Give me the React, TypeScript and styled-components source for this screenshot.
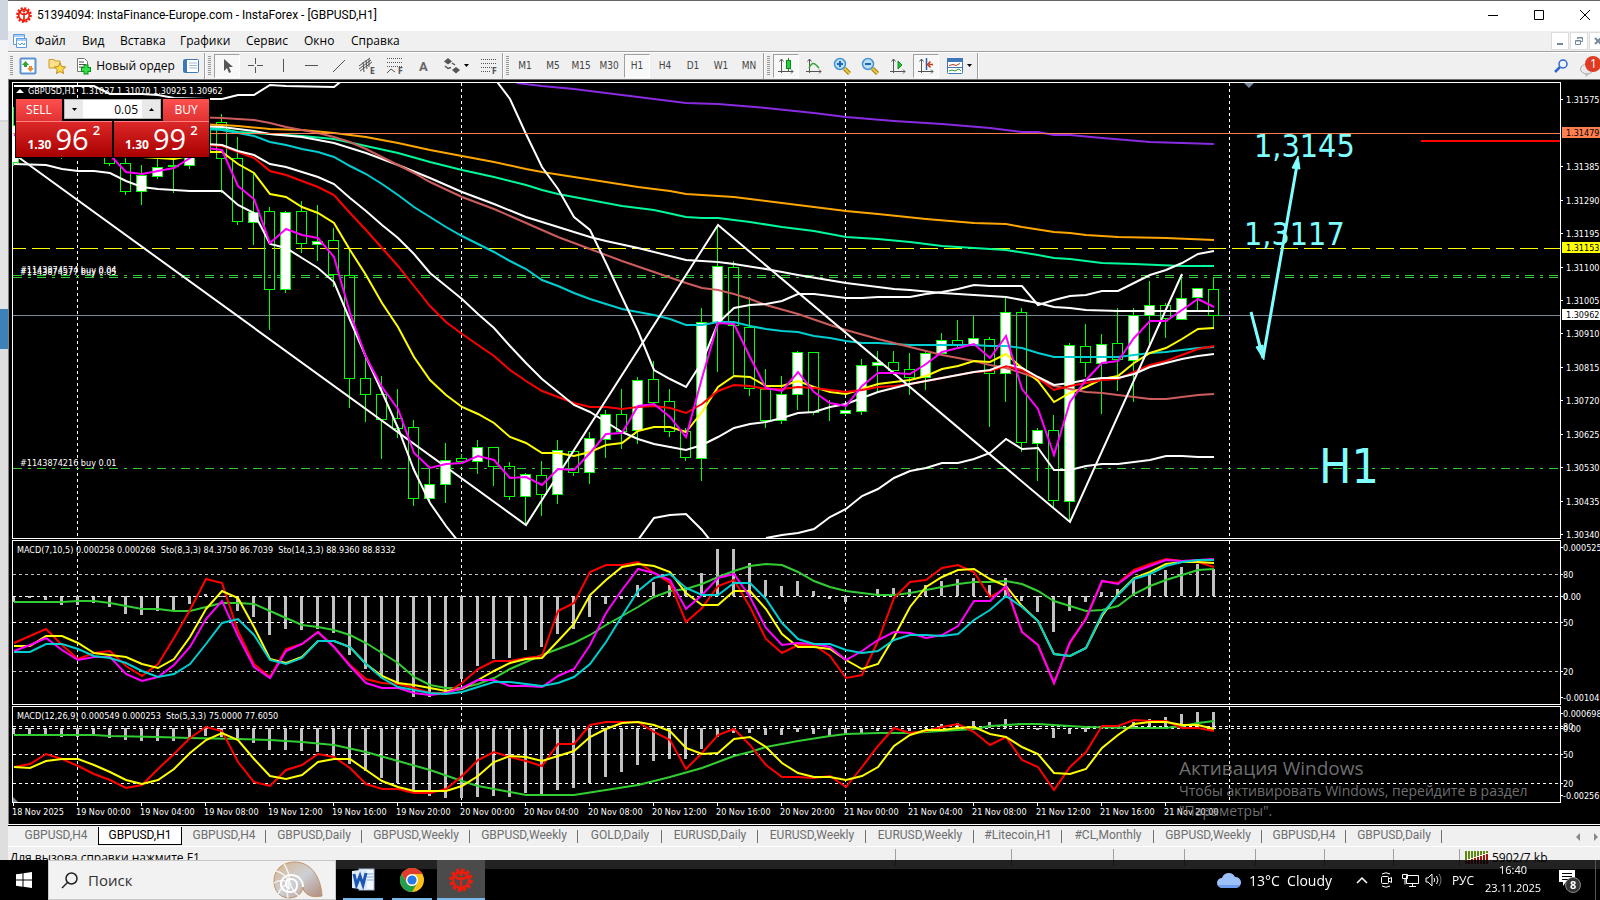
import React from "react";
import styled, { createGlobalStyle, css } from "styled-components";

/* ---------- tokens ---------- */

const UI = '"Open Sans", "Noto Sans", sans-serif';
const NARROW = 'Roboto, "Open Sans", sans-serif';
const CHART = '"DejaVu Sans Condensed", "DejaVu Sans", sans-serif';
const AQUA = "#7fffff";
const LIME = "#00ff00";

/* ---------- chart data ---------- */

const STEP = 16;
const barX = (i: number) => i * STEP + 1;

type Candle = [high: number, top: number, bottom: number, low: number, bull: 0 | 1];

const candles: Candle[] = [
  [107, 125, 162, 166, 1], [110, 125, 140, 150, 0], [110, 125, 140, 150, 0], [120, 130, 150, 159, 0],
  [120, 130, 150, 155, 0], [120, 130, 150, 155, 0], [130, 140, 163, 166, 0], [157, 163, 191, 195, 0],
  [165, 175, 191, 205, 1], [159, 167, 176, 179, 1], [150, 165, 166, 193, 0], [140, 150, 165, 169, 1],
  [120, 130, 150, 152, 1], [114, 122, 158, 193, 0], [137, 158, 221, 225, 0], [173, 212, 222, 245, 1],
  [207, 211, 289, 330, 0], [211, 212, 289, 293, 1], [201, 211, 243, 253, 0], [205, 241, 244, 261, 1],
  [228, 240, 274, 287, 0], [250, 275, 378, 408, 0], [357, 378, 394, 422, 0], [376, 394, 419, 459, 0],
  [389, 418, 428, 438, 0], [420, 427, 498, 506, 0], [467, 484, 498, 501, 1], [443, 460, 484, 503, 1],
  [454, 458, 461, 463, 0], [440, 447, 461, 474, 1], [447, 447, 466, 486, 0], [462, 466, 496, 500, 0],
  [473, 474, 496, 525, 1], [461, 475, 494, 516, 0], [440, 450, 494, 504, 1], [450, 451, 472, 476, 0],
  [432, 438, 472, 484, 1], [410, 414, 439, 458, 1], [389, 414, 431, 449, 0], [377, 380, 430, 444, 1],
  [361, 379, 402, 404, 0], [389, 401, 431, 437, 0], [428, 431, 457, 461, 0], [308, 322, 458, 481, 1],
  [225, 266, 322, 372, 1], [261, 267, 325, 375, 0], [297, 327, 388, 396, 0], [369, 389, 420, 428, 0],
  [376, 394, 420, 424, 1], [351, 352, 394, 410, 1], [352, 352, 412, 415, 0], [400, 412, 412, 421, 0],
  [407, 410, 413, 415, 1], [359, 365, 411, 415, 1], [351, 362, 365, 392, 1], [351, 362, 370, 375, 0],
  [353, 369, 377, 395, 0], [351, 353, 377, 390, 1], [333, 340, 353, 355, 1], [320, 340, 345, 347, 0],
  [316, 338, 344, 344, 1], [337, 339, 373, 427, 0], [298, 312, 373, 402, 1], [308, 312, 442, 452, 0],
  [428, 430, 443, 481, 1], [415, 430, 500, 508, 0], [343, 345, 501, 521, 1], [324, 346, 362, 377, 0],
  [334, 344, 363, 414, 1], [308, 343, 359, 391, 0], [308, 315, 360, 402, 1], [281, 305, 315, 348, 1],
  [303, 305, 318, 338, 0], [276, 298, 319, 320, 1], [288, 288, 297, 310, 1], [277, 289, 315, 327, 0],
];

type Line = { color: string; points: string };

/* points are "bar,y" pairs */
const from = (start: number, ys: number[]) => ys.map((y, i) => `${start + i},${y}`).join(" ");

const priceLines: Line[] = [
  { color: "#8a2be2", points: "31.4,83 33,86 35,89 38,95 42,103 44,104 47,108 50,113 52,117 55,121 58,124 61,128 63,132 64,132 65,135 66,135 68,138 71,142 73,143 75,144" },
  { color: "#ffa500", points: "11,124 13,125 14,126 16,129 18,130 20,133 22,137 24,143 26,150 28,156 30,162 32,169 33,172 35,177 37,182 39,187 41,191 42,194 44,196 45,197 48,203 52,211 54,214 57,219 60,223 62,224 63,227 65,232 66,233 67,235 69,237 72,238 75,240" },
  { color: "#00fa9a", points: "11,128 13,129 14,132 16,134 18,136 20,139 22,146 24,153 26,162 28,170 30,177 32,185 33,190 34,194 36,200 38,206 40,210 42,217 43,218 44,218 46,222 48,227 50,231 52,237 54,239 56,242 58,246 60,248 62,250 64,255 65,258 66,259 68,263 70,264 73,266 75,266" },
  { color: "#00ced1", points: from(12, [129, 130, 133, 136, 142, 145, 149, 152, 157, 166, 174, 184, 195, 207, 217, 227, 236, 244, 252, 261, 269, 280, 286, 293, 299, 304, 309, 312, 315, 319, 325, 325, 322, 322, 326, 329, 331, 332, 336, 338, 341, 343, 343, 344, 345, 345, 345, 345, 345, 346, 346, 348, 353, 357, 357, 357, 357, 357, 355, 353, 352, 350, 348, 347]) },
  { color: "#fff", points: "11,126 13,127 15,131 16,134 18,137 20,143 22,153 24,165 26,178 28,192 30,204 32,217 33,222 36,237 37,241 39,248 42,260 43,261 44,262 45,264 47,269 49,275 52,283 55,289 56,290 58,293 60,295 62,297 64,303 65,307 66,308 67,310 69,311 75,311" },
  { color: "#cd5c5c", points: "11,117 13,118 14,119 15,120 16,123 17,127 18,130 19,133 20,137 21,142 22,149 23,157 24,165 25,173 26,182 28,197 30,209 32,223 33,230 34,237 36,249 38,261 40,272 42,283 43,288 44,290 45,294 46,299 47,305 49,314 51,325 52,330 54,339 56,347 58,355 60,361 61,365 62,368 63,373 64,379 65,386 66,389 67,392 68,393 69,395 70,397 71,399 72,399 73,397 74,395 75,394" },
  { color: "#ffff00", points: from(6, [150, 155, 157, 158, 159, 156, 152, 152, 164, 173, 194, 197, 207, 213, 223, 250, 275, 303, 327, 357, 380, 395, 407, 414, 423, 437, 443, 453, 453, 456, 452, 445, 443, 431, 427, 427, 432, 412, 387, 376, 377, 386, 386, 381, 387, 392, 394, 389, 384, 382, 380, 376, 369, 366, 361, 362, 354, 368, 381, 402, 393, 387, 379, 376, 363, 353, 348, 339, 329, 328]) },
  { color: "#ff0000", points: from(12, [145, 146, 152, 158, 171, 175, 181, 187, 195, 213, 230, 248, 266, 286, 306, 322, 334, 345, 356, 370, 381, 391, 397, 403, 407, 407, 409, 407, 406, 408, 413, 404, 391, 385, 386, 389, 389, 387, 388, 390, 392, 390, 387, 386, 384, 381, 378, 375, 372, 371, 366, 370, 378, 390, 386, 383, 380, 379, 372, 365, 361, 355, 349, 346]) },
  { color: "#fff", points: from(12, [144, 145, 151, 155, 164, 167, 172, 177, 184, 198, 211, 225, 238, 254, 273, 286, 299, 314, 328, 346, 363, 379, 392, 405, 412, 422, 432, 439, 444, 447, 450, 445, 437, 428, 424, 422, 418, 413, 412, 407, 404, 398, 392, 388, 384, 381, 378, 375, 372, 370, 364, 368, 377, 385, 383, 380, 378, 378, 374, 367, 363, 359, 356, 354]) },
  { color: "#fff", points: "0,86 5,86 6,94 8,94 9,95 10,98 12,99 13,99 14,95 15,95 16,85 17,86 20,87 20.4,82" },
  { color: "#fff", points: "30.2,82 " + from(31, [99, 134, 167, 189, 217, 230, 263, 297, 331, 370, 379, 387, 362, 323, 308, 305, 304, 301, 294, 294, 296, 298, 298, 297, 297, 297, 294, 292, 289, 285, 286, 286, 286, 305, 300, 296, 295, 291, 291, 283, 275, 270, 263, 254, 251]) },
  { color: "#fff", points: "0,164 2,165 3,169 4,171 5,171 6,173 7,181 8,187 9,189 11,191 13,191 14,205 15,213 16,244 17,248 18,258 19,268 20,282 21,320 22,357 23,392 24,428 25,470 26,503 27,526 27.7,540" },
  { color: "#fff", points: "39,540 40,518 41,515 42,514 43,530 43.5,540" },
  { color: "#fff", points: from(47, [538, 535, 533, 529, 517, 509, 496, 489, 478, 471, 468, 463, 463, 459, 453, 439, 449, 448, 470, 470, 466, 464, 464, 462, 460, 456, 456, 457, 457]) },
  { color: "#fff", points: "0,154 32,525 44,225 66,522 73,274" },
  { color: "#ff00ff", points: from(0, [135, 140, 140, 140, 140, 145, 155, 172, 174, 171, 168, 158, 148, 150, 186, 199, 243, 229, 235, 238, 257, 313, 357, 387, 409, 453, 468, 464, 463, 456, 460, 478, 477, 485, 469, 470, 453, 434, 433, 406, 404, 417, 437, 378, 323, 324, 357, 388, 391, 372, 392, 403, 406, 386, 373, 373, 374, 364, 352, 348, 344, 358, 336, 389, 409, 455, 402, 380, 363, 361, 338, 321, 321, 310, 299, 307]) },
];

const macdFast = [602, 598, 600, 605, 605, 603, 607, 614, 615, 611, 610, 604, 594, 597, 611, 617, 635, 629, 630, 629, 633, 655, 669, 678, 683, 697, 697, 693, 679, 666, 659, 658, 650, 647, 634, 629, 617, 604, 599, 585, 582, 585, 588, 573, 549, 549, 563, 580, 586, 581, 591, 599, 602, 597, 589, 588, 589, 585, 581, 579, 578, 585, 578, 601, 612, 632, 611, 602, 592, 589, 580, 574, 570, 567, 564, 569];

const macdSlow = [734, 734, 734, 737, 737, 735, 738, 740, 741, 741, 741, 738, 736, 737, 739, 743, 750, 750, 751, 752, 756, 764, 771, 778, 783, 791, 796, 798, 798, 797, 796, 797, 793, 794, 790, 788, 783, 777, 772, 765, 761, 759, 759, 749, 737, 733, 733, 735, 735, 732, 734, 736, 735, 733, 731, 729, 731, 727, 724, 723, 721, 722, 719, 729, 730, 738, 734, 732, 729, 727, 722, 719, 717, 714, 712, 712];

const fastLines: Line[] = [
  { color: "#32cd32", points: from(0, [602, 602, 602, 602, 601, 601, 603, 606, 609, 609, 611, 611, 607, 603, 603, 604, 611, 618, 625, 627, 630, 635, 643, 653, 663, 677, 685, 688, 688, 684, 678, 669, 662, 655, 649, 643, 635, 625, 616, 607, 597, 591, 589, 584, 577, 571, 566, 564, 565, 572, 581, 587, 591, 593, 595, 595, 593, 590, 587, 584, 582, 582, 581, 584, 591, 601, 606, 611, 610, 606, 594, 586, 580, 575, 570, 569]) },
  { color: "#ff0000", points: from(0, [643, 636, 629, 645, 659, 653, 651, 666, 676, 664, 638, 610, 579, 583, 631, 664, 677, 649, 644, 632, 647, 665, 679, 683, 684, 688, 693, 693, 683, 669, 661, 661, 658, 656, 611, 603, 572, 565, 565, 562, 573, 583, 622, 608, 586, 580, 607, 639, 653, 645, 645, 656, 678, 675, 641, 598, 582, 580, 568, 565, 572, 597, 588, 632, 645, 683, 643, 618, 581, 583, 570, 564, 559, 561, 562, 567]) },
  { color: "#ffff00", points: from(0, [646, 646, 636, 636, 643, 653, 655, 657, 664, 668, 659, 637, 609, 591, 598, 627, 659, 663, 657, 641, 641, 647, 664, 676, 683, 685, 688, 691, 689, 680, 671, 663, 659, 658, 641, 624, 595, 580, 567, 564, 566, 572, 593, 605, 605, 591, 591, 609, 634, 647, 647, 649, 660, 669, 664, 637, 607, 587, 577, 570, 569, 579, 586, 606, 621, 654, 656, 648, 616, 594, 578, 572, 564, 562, 562, 563]) },
  { color: "#ff00ff", points: from(0, [651, 645, 638, 650, 660, 657, 657, 674, 681, 677, 665, 647, 619, 601, 636, 667, 678, 651, 644, 632, 647, 666, 683, 688, 688, 693, 695, 693, 688, 680, 680, 686, 686, 687, 676, 669, 645, 613, 590, 569, 573, 580, 609, 595, 578, 574, 597, 628, 645, 643, 644, 647, 660, 651, 640, 632, 633, 638, 635, 626, 601, 601, 586, 632, 645, 683, 642, 619, 581, 584, 572, 566, 560, 561, 560, 559]) },
  { color: "#00ced1", points: from(0, [652, 652, 644, 644, 649, 656, 658, 663, 671, 677, 674, 664, 644, 623, 619, 635, 660, 664, 658, 641, 641, 647, 664, 678, 687, 690, 693, 694, 692, 687, 682, 682, 684, 686, 683, 677, 664, 642, 616, 591, 578, 574, 588, 595, 595, 583, 583, 599, 623, 639, 644, 644, 650, 653, 651, 640, 635, 635, 636, 634, 620, 610, 596, 607, 621, 654, 656, 648, 614, 595, 579, 574, 566, 562, 560, 560]) },
];

const slowLines: Line[] = [
  { color: "#32cd32", points: "0,735 5,735 6,736 9,737 11,738 14,739 16,740 18,742 20,745 22,752 24,761 26,770 28,781 29,786 30,789 31,792 32,795 35,795 37,790 39,785 41,777 43,768 44,762 45,756 46,752 47,747 49,741 51,736 52,734 54,733 56,733 58,731 60,729 61,726 62,725 63,724 64,724 65,725 66,726 67,727 70,728 72,728 73,726 74,723 75,721" },
  { color: "#ff0000", points: from(0, [767, 764, 754, 759, 766, 774, 780, 788, 785, 769, 754, 738, 727, 731, 762, 782, 786, 770, 765, 754, 757, 768, 784, 789, 789, 793, 793, 789, 776, 760, 752, 757, 761, 766, 744, 744, 725, 722, 722, 722, 732, 740, 769, 753, 735, 729, 745, 765, 777, 777, 778, 776, 787, 767, 746, 728, 733, 731, 727, 724, 732, 745, 737, 760, 767, 790, 767, 752, 726, 726, 720, 721, 721, 728, 728, 731]) },
  { color: "#ffff00", points: from(0, [767, 768, 761, 759, 759, 765, 772, 780, 784, 780, 769, 753, 740, 733, 740, 759, 776, 779, 775, 762, 759, 759, 770, 781, 787, 791, 791, 791, 786, 776, 762, 756, 757, 761, 756, 751, 737, 729, 723, 722, 725, 731, 748, 754, 753, 739, 737, 747, 763, 773, 777, 777, 780, 776, 767, 746, 735, 730, 730, 728, 727, 734, 737, 747, 754, 773, 774, 769, 748, 735, 724, 722, 722, 725, 725, 729]) },
];

const priceTicks: [string, number][] = [
  ["1.31575", 99], ["1.31385", 166], ["1.31290", 200], ["1.31195", 233], ["1.31100", 267], ["1.31005", 300],
  ["1.30910", 333], ["1.30815", 367], ["1.30720", 400], ["1.30625", 434], ["1.30530", 467], ["1.30435", 501], ["1.30340", 534],
];
const priceFlags: [string, number, string, string][] = [
  ["1.31479", 133, "#ff7f50", "#000"],
  ["1.31153", 248, "#ffff00", "#000"],
  ["1.30962", 315, "#fff", "#000"],
];

const timeLabels = [
  "18 Nov 2025", "19 Nov 00:00", "19 Nov 04:00", "19 Nov 08:00", "19 Nov 12:00", "19 Nov 16:00", "19 Nov 20:00",
  "20 Nov 00:00", "20 Nov 04:00", "20 Nov 08:00", "20 Nov 12:00", "20 Nov 16:00", "20 Nov 20:00",
  "21 Nov 00:00", "21 Nov 04:00", "21 Nov 08:00", "21 Nov 12:00", "21 Nov 16:00", "21 Nov 20:00",
];

/* ---------- page frame ---------- */

const Global = createGlobalStyle`
  * { box-sizing: border-box; }
  html, body { margin: 0; background: #030303; }
  body { font-family: ${UI}; font-size: 12px; color: #000; overflow-x: hidden; }
  button, input { font: inherit; color: inherit; margin: 0; }
`;

const Desktop = styled.div`
  display: flex;
  min-height: 100vh;
  align-items: flex-start;
  overflow: hidden;
`;

const Behind = styled.div`
  flex: 0 0 8px;
  height: 868px;
  background: linear-gradient(#cfd6df 0 40px, #f3f4f6 40px 120px, #d5d7da 120px 122px, #e3e3e3 122px 309px, #3c82b8 309px 349px, #dedede 349px);
`;

const Window = styled.div`
  flex: 1;
  min-width: 0;
  display: flex;
  flex-direction: column;
  background: #f0f0f0;
  border-top: 1px solid #666;
`;

const TitleBar = styled.header`
  display: flex;
  align-items: center;
  height: 30px;
  margin-right: -8px;
  padding: 0 0 2px 8px;
  background: #fff;
`;

const Title = styled.h1`
  flex: 1;
  margin: 0 0 0 5px;
  font-family: ${NARROW};
  font-size: 12px;
  font-weight: 400;
`;

const Caption = styled.button`
  width: 46px;
  height: 28px;
  padding: 0;
  border: 0;
  background: none;
  display: grid;
  place-items: center;
`;

const MenuBar = styled.nav`
  display: flex;
  align-items: center;
  height: 20px;
  padding-left: 4px;
`;

const MenuItem = styled.button<{ $w: number }>`
  width: ${(p) => p.$w}px;
  padding: 0;
  border: 0;
  background: none;
  text-align: left;
  line-height: 16px;
  white-space: nowrap;
`;

const MdiButtons = styled.div`
  display: flex;
  gap: 1px;
  margin-left: auto;
  margin-right: -7px;
`;

const MdiButton = styled.button`
  width: 18px;
  height: 18px;
  padding: 0;
  border: 1px solid #dcdcdc;
  background: #fff;
  display: grid;
  place-items: center;
`;

const ToolBar = styled.div`
  display: flex;
  align-items: center;
  height: 28px;
  border-top: 1px solid #a0a0a0;
  box-shadow: inset 0 1px #fff;
`;

const Grip = styled.span`
  width: 3px;
  height: 20px;
  margin: 0 3px 0 2px;
  background: repeating-linear-gradient(#9a9a9a 0 1px, transparent 1px 2px);
`;

const Divider = styled.span`
  width: 2px;
  height: 26px;
  border-left: 1px solid #a0a0a0;
  border-right: 1px solid #fff;
`;

const Group = styled.div<{ $gap?: number }>`
  display: flex;
  align-items: center;
  gap: ${(p) => p.$gap ?? 2}px;
`;

const Tool = styled.button<{ $on?: boolean; $w?: number }>`
  width: ${(p) => p.$w ?? 26}px;
  height: 24px;
  padding: 0;
  border: 1px solid transparent;
  background: none;
  display: flex;
  align-items: center;
  justify-content: center;
  gap: 3px;
  white-space: nowrap;
  ${(p) => p.$on && css`
    border-color: #a0a0a0 #fff #fff #a0a0a0;
    background: #f8f8f8;
  `}
`;

const Frame = styled(Tool)`
  font-family: ${CHART};
  font-size: 10px;
  color: #444;
`;

const ToolEnd = styled.div`
  display: flex;
  align-items: center;
  gap: 12px;
  margin-left: auto;
`;

/* ---------- chart ---------- */

const ChartArea = styled.main`
  position: relative;
  display: flex;
  flex-direction: column;
  gap: 1px;
  height: 745px;
  padding: 2px 0 0 3px;
  background: #000;
  border-left: 1px solid #808080;
  border-top: 1px solid #707070;
`;

const PaneRow = styled.section<{ $h: number }>`
  display: flex;
  height: ${(p) => p.$h}px;
`;

const Plot = styled.div`
  flex: 1;
  min-width: 0;
  border: 1px solid #fff;
  svg { display: block; width: 100%; height: 100%; }
`;

const Scale = styled.svg`
  flex: none;
  width: 39px;
  height: 100%;
  overflow: visible;
`;

const TimeAxis = styled.div`
  display: flex;
  font: 9px/12px ${CHART};
  color: #fff;
  margin-top: -1px;
`;

const TimeCell = styled.span`
  flex: 0 0 64px;
  white-space: nowrap;
  &::before {
    content: "";
    display: block;
    width: 1px;
    height: 3px;
    margin: 0 0 0 1px;
    background: #fff;
  }
`;

const Trade = styled.form`
  position: absolute;
  left: 6px;
  top: 18px;
  display: grid;
  grid-template-columns: 46px minmax(0, 1fr) 46px;
  grid-template-rows: 22px 36px;
  width: 195px;
  height: 60px;
  padding: 1px;
  background: #000;
  color: #fff;
`;

const Side = styled.button`
  margin: 0;
  padding: 0;
  border: 0;
  background: linear-gradient(#ff5050, #e03232);
  font-size: 12px;
  line-height: 20px;
`;

const Lots = styled.div`
  display: flex;
  min-width: 0;
  height: 20px;
  margin: 0 2px;
  background: #e9e9e9;
  border: 1px solid #b5b5b5;
`;

const LotStep = styled.button`
  flex: 0 0 18px;
  padding: 0;
  border: 0;
  background: none;
  display: grid;
  place-items: center;
`;

const LotInput = styled.input`
  flex: 1;
  width: 0;
  min-width: 0;
  padding: 0 4px;
  border: 0;
  background: #fff;
  color: #000;
  text-align: right;
`;

const Quotes = styled.div`
  grid-column: 1 / -1;
  display: grid;
  grid-template-columns: 1fr 1fr;
  gap: 2px;
`;

const Quote = styled.button`
  display: flex;
  align-items: flex-end;
  justify-content: center;
  gap: 4px;
  padding: 0 0 4px;
  border: 0;
  border-top: 1px solid #ff8080;
  background: linear-gradient(#dc2828, #a80000);
  b { font-size: 12px; line-height: 16px; }
  span { font-size: 29px; line-height: 29px; }
  sup { font-size: 13px; line-height: 16px; align-self: flex-start; font-weight: 600; }
`;

const Watermark = styled.aside`
  position: absolute;
  right: 50px;
  top: 675px;
  width: 371px;
  color: rgba(150, 150, 150, 0.75);
  font-size: 14px;
  line-height: 20px;
  pointer-events: none;
  white-space: nowrap;
  h2 { margin: 0; font-size: 19px; line-height: 26px; font-weight: 400; }
  p { margin: 0; }
`;

const Tabs = styled.div`
  display: flex;
  height: 23px;
  padding-top: 2px;
  border-top: 1px solid #fff;
  box-shadow: inset 0 1px #000;
  border-bottom: 1px solid #fff;
`;

const Tab = styled.button<{ $w: number; $on?: boolean; $bar?: boolean }>`
  position: relative;
  flex: none;
  width: ${(p) => p.$w}px;
  height: 18px;
  padding: 0 0 2px;
  border: 0;
  background: none;
  color: #6e6e6e;
  font-family: ${NARROW};
  white-space: nowrap;
  line-height: 16px;
  &:first-child { padding-left: 6px; }
  ${(p) => p.$bar && css`
    background: linear-gradient(#6e6e6e, #6e6e6e) right 3px / 1px 13px no-repeat;
  `}
  ${(p) => p.$on && css`
    color: #000;
    background: #fff;
    border: solid #000;
    border-width: 0 1px 1px;
  `}
`;

const TabArrows = styled.div`
  display: flex;
  align-items: center;
  gap: 14px;
  margin-left: auto;
  padding-right: 2px;
`;

const StatusBar = styled.footer`
  display: flex;
  align-items: flex-start;
  height: 22px;
  padding: 2px 0 0 2px;
  line-height: 17px;
`;

const StatusText = styled.span`
  flex: 1;
`;

const StatusCell = styled.span<{ $w: number }>`
  display: flex;
  align-items: center;
  gap: 4px;
  flex: 0 0 ${(p) => p.$w}px;
  height: 17px;
  padding-left: 5px;
  border-left: 1px solid #a0a0a0;
  white-space: nowrap;
`;

/* ---------- task bar ---------- */

const TaskBar = styled.div`
  position: fixed;
  left: 0;
  right: 0;
  bottom: 0;
  height: 40px;
  display: flex;
  align-items: center;
  background: rgba(0, 0, 0, 0.86);
  color: #fff;
`;

const Start = styled.button`
  width: 48px;
  height: 40px;
  padding: 0;
  border: 0;
  background: #000;
  display: grid;
  place-items: center;
`;

const Search = styled.label`
  display: flex;
  align-items: center;
  gap: 10px;
  width: 288px;
  height: 40px;
  padding: 0 12px;
  background: #f2f2f2;
  border: 1px solid #c8c8c8;
  color: #222;
`;

const SearchInput = styled.input`
  flex: 1;
  min-width: 0;
  padding: 0;
  border: 0;
  background: none;
  font-size: 15px;
  &::placeholder { color: #333; opacity: 1; }
`;

const TaskButton = styled.button<{ $on?: boolean }>`
  width: 48px;
  height: 40px;
  padding: 0;
  border: 0;
  background: ${(p) => (p.$on ? "#4b4b4b" : "none")};
  display: grid;
  place-items: center;
  box-shadow: inset 0 -2px #76b9ed;
`;

const Apps = styled.div`
  display: flex;
  gap: 1px;
  margin-left: 3px;
  button:nth-child(-n + 2) { width: 40px; margin: 0 4px; }
`;

const Tray = styled.div`
  display: flex;
  align-items: center;
  margin-left: auto;
  font-size: 12px;
`;

const Weather = styled.button`
  display: flex;
  align-items: center;
  gap: 8px;
  width: 125px;
  margin-right: 8px;
  padding: 0;
  border: 0;
  background: none;
  font-size: 14px;
  white-space: pre;
`;

const TrayButton = styled.button<{ $w: number }>`
  width: ${(p) => p.$w}px;
  height: 40px;
  padding: 0;
  border: 0;
  background: none;
  display: grid;
  place-items: center;
`;

const Clock = styled.time`
  width: 70px;
  text-align: center;
  font-size: 11px;
  line-height: 18px;
  padding: 0 8px 2px 0;
`;

const Notify = styled(TrayButton)`
  padding-right: 10px;
  border-right: 1px solid #555;
  margin-right: 4px;
`;

/* ---------- drawings ---------- */

const InstaLogo = ({ size }: { size: number }) => (
  <svg width={size} height={size} viewBox="0 0 24 24" fill="none" stroke="#ee1c0c">
    <circle cx="12" cy="12" r="10.200" strokeWidth="3.200" strokeDasharray="3.200 2.140" />
    <circle cx="12" cy="12" r="8" strokeWidth="2.600" />
    <path d="M12 9v14M6.500 7c0 3 2.500 4 5.500 4s5.500-1 5.500-4" strokeWidth="2.400" />
    <circle cx="12" cy="6.500" r="1.800" fill="#ee1c0c" stroke="none" />
  </svg>
);

const Down = ({ up, color = "#000" }: { up?: boolean; color?: string }) => (
  <svg width="5" height="3" viewBox="0 0 5 3" fill={color}>
    <path d={up ? "M0 3h5L2.500 0z" : "M0 0h5L2.500 3z"} />
  </svg>
);

const Icon = ({ children, w = 18, h = 18 }: { children: React.ReactNode; w?: number; h?: number }) => (
  <svg width={w} height={h} viewBox={`0 0 ${w} ${h}`} fill="none" stroke="#555" strokeWidth="1">
    {children}
  </svg>
);

const Axes = () => <path d="M4.500 2v14M1 14.500h15M2.500 4.500l2-2.500 2 2.500M14 12.500l2 2-2 2" />;

const FLetter = ({ x = 12, c = "F" }: { x?: number; c?: string }) => (
  <text x={x} y="17" fontSize="8" fontWeight="700" fontFamily={CHART} fill="#555" stroke="none">{c}</text>
);

const Magnifier = ({ plus }: { plus?: boolean }) => (
  <Icon>
    <path d="M11.500 11.500l5 5" stroke="#a07812" strokeWidth="4" />
    <path d="M11.500 11.500l5 5" stroke="#f0cc3c" strokeWidth="2" />
    <circle cx="7" cy="7" r="5.500" fill="#b9dff8" stroke="#4b93cc" strokeWidth="1.500" />
    <path d={plus ? "M4 7h6M7 4v6" : "M4 7h6"} stroke="#1f6aa8" strokeWidth="2" />
  </Icon>
);

/* ---------- chart parts ---------- */

const toPoints = (points: string) =>
  points.split(" ").map((p) => {
    const [bar, y] = p.split(",").map(Number);
    return `${barX(bar)},${y}`;
  }).join(" ");

const Lines = ({ lines }: { lines: Line[] }) => (
  <g fill="none" strokeWidth="2" shapeRendering="geometricPrecision">
    {lines.map((l, i) => <polyline key={i} points={toPoints(l.points)} stroke={l.color} />)}
  </g>
);

const Level = ({ y, color, dash, dy = 0, w = 1 }: { y: number; color: string; dash?: string; dy?: number; w?: number }) => (
  <line x1="0" x2="100%" y1={y + 0.5} y2={y + 0.5} stroke={color} strokeWidth={w} strokeDasharray={dash} strokeDashoffset={dy} />
);

const Separators = ({ top, h }: { top: number; h: number }) => (
  <g stroke="#fff" strokeDasharray="3 3">
    {[4, 28, 52, 76].map((b) => (
      <line key={b} x1={barX(b) - 0.5} x2={barX(b) - 0.5} y1={top} y2={top + h} />
    ))}
  </g>
);

const Histogram = ({ base, ends }: { base: number; ends: number[] }) => (
  <g fill="#c0c0c0">
    {ends.map((e, i) => (
      <rect key={i} x={barX(i) - 2} width="3" y={Math.min(base, e)} height={Math.max(1, Math.abs(base - e))} />
    ))}
  </g>
);

const Candles = () => (
  <g stroke={LIME}>
    {candles.map(([h, t, b, l, bull], i) => {
      const x = barX(i) - 0.5;
      return (
        <g key={i}>
          <path d={`M${x} ${h}V${t}M${x} ${b}V${l}`} />
          <rect x={x - 5} y={t + 0.5} width="10" height={b - t} fill={bull ? "#fff" : "none"} />
        </g>
      );
    })}
  </g>
);

const ChartText = styled.text`
  font-family: ${CHART};
  font-size: 9px;
  fill: #fff;
  white-space: pre;
`;

const ScaleTicks = ({ x, ticks }: { x: number; ticks: [string, number][] }) => (
  <g>
    {ticks.map(([t, y]) => (
      <g key={t + y}>
        <path d={`M0 ${y + 0.5}h2`} stroke="#fff" />
        <ChartText x={x} y={y + 4}>{t}</ChartText>
      </g>
    ))}
  </g>
);

const PricePane = () => (
  <PaneRow $h={457}>
    <Plot>
      <svg aria-label="GBPUSD H1">
        <g transform="translate(0 -83)" shapeRendering="crispEdges">
          <Separators top={83} h={456} />
          <Level y={275} color="#32cd32" dash="9 6 3 6" />
          <Level y={277} color="#32cd32" dash="9 6 3 6" />
          <Level y={468} color="#32cd32" dash="9 6 3 6" />
          <Level y={248} color="#ffff00" dash="18 6" dy={5} />
          <Level y={315} color="#778899" />
          <Candles />
          <Lines lines={priceLines} />
          <Level y={133} color="#ff7f50" />
          <path d="M1408 141h800" stroke="#ff0000" strokeWidth="2" />
        </g>
        <g transform="translate(0 -83)">
          <path d="M3 93l4-4 4 4z" fill="#fff" />
          <path d="M1231 83h10l-5 5z" fill="#778899" />
          <ChartText x={15} y={94}>{"GBPUSD,H1  1.31037 1.31070 1.30925 1.30962"}</ChartText>
          <ChartText x={7} y={273}>#1143874574 buy 0.04</ChartText>
          <ChartText x={7} y={275}>#1143874577 buy 0.05</ChartText>
          <ChartText x={7} y={466}>#1143874216 buy 0.01</ChartText>
          <g fill={AQUA} fontFamily={CHART}>
            <text x="1241" y="157" fontSize="32">1,3145</text>
            <text x="1231" y="245" fontSize="32">1,3117</text>
            <text x="1306" y="483" fontSize="48">H1</text>
          </g>
          <g stroke={AQUA} strokeWidth="3" fill={AQUA}>
            <path d="M1238 312l12 46M1250 358l34-193" />
            <path d="M1251 360l-8-13 7-2z" strokeWidth="1" />
            <path d="M1285 156l2 13-8-1z" strokeWidth="1" />
          </g>
        </g>
      </svg>
    </Plot>
    <Scale>
      <g transform="translate(0 -82)">
        <ScaleTicks x={5} ticks={priceTicks} />
        {priceFlags.map(([t, y, bg, fg]) => (
          <g key={t}>
            <rect x="1" y={y - 6} width="40" height="11" fill={bg} />
            <text x="5" y={y + 3} fontSize="9" fontFamily={CHART} fill={fg}>{t}</text>
          </g>
        ))}
      </g>
    </Scale>
  </PaneRow>
);

const FastPane = () => (
  <PaneRow $h={165}>
    <Plot>
      <svg aria-label="MACD and stochastic, fast">
        <g transform="translate(0 -541)" shapeRendering="crispEdges">
          <Separators top={541} h={163} />
          <Histogram base={596} ends={macdFast} />
          <Level y={574} color="#c0c0c0" dash="3 3" />
          <Level y={596} color="#fff" dash="3 3" />
          <Level y={622} color="#fff" dash="3 3" />
          <Level y={671} color="#c0c0c0" dash="3 3" />
          <Lines lines={fastLines} />
        </g>
        <ChartText x={4} y={12}>{"MACD(7,10,5) 0.000258 0.000268  Sto(8,3,3) 84.3750 86.7039  Sto(14,3,3) 88.9360 88.8332"}</ChartText>
      </svg>
    </Plot>
    <Scale>
      <g transform="translate(0 -540)">
        <ScaleTicks x={2} ticks={[["0.000525", 547], ["80", 574], ["0.00", 596], ["0", 596], ["50", 622], ["20", 671], ["-0.00104", 697]]} />
      </g>
    </Scale>
  </PaneRow>
);

const SlowPane = () => (
  <PaneRow $h={97}>
    <Plot>
      <svg aria-label="MACD and stochastic, slow">
        <g transform="translate(0 -707)" shapeRendering="crispEdges">
          <Separators top={707} h={95} />
          <Histogram base={728} ends={macdSlow} />
          <Level y={726} color="#fff" dash="3 3" />
          <Level y={728} color="#fff" dash="3 3" />
          <Level y={754} color="#fff" dash="3 3" />
          <Level y={783} color="#fff" dash="3 3" />
          <Lines lines={slowLines} />
        </g>
        <path d="M0 90l5 5H0z" fill="#778899" />
        <ChartText x={4} y={12}>{"MACD(12,26,9) 0.000549 0.000253  Sto(5,3,3) 75.0000 77.6050"}</ChartText>
      </svg>
    </Plot>
    <Scale>
      <g transform="translate(0 -706)">
        <ScaleTicks x={2} ticks={[["0.000698", 713], ["80", 726], ["0.00", 728], ["50", 754], ["20", 783], ["-0.00256", 795]]} />
      </g>
    </Scale>
  </PaneRow>
);

/* ---------- screen ---------- */

const menus: [string, number][] = [["Файл", 47], ["Вид", 38], ["Вставка", 60], ["Графики", 66], ["Сервис", 58], ["Окно", 47], ["Справка", 60]];

const tabs: [string, number][] = [
  ["GBPUSD,H4", 90], ["GBPUSD,H1", 84], ["GBPUSD,H4", 84], ["GBPUSD,Daily", 96], ["GBPUSD,Weekly", 108], ["GBPUSD,Weekly", 108],
  ["GOLD,Daily", 84], ["EURUSD,Daily", 96], ["EURUSD,Weekly", 108], ["EURUSD,Weekly", 108], ["#Litecoin,H1", 88], ["#CL,Monthly", 92],
  ["GBPUSD,Weekly", 108], ["GBPUSD,H4", 84], ["GBPUSD,Daily", 96],
];

export default function App() {
  return (
    <>
      <Global />
      <Desktop>
        <Behind />
        <Window>
          <TitleBar>
            <InstaLogo size={16} />
            <Title>51394094: InstaFinance-Europe.com - InstaForex - [GBPUSD,H1]</Title>
            <Caption aria-label="Minimize"><Icon w={10} h={10}><path d="M0 5.500h10" stroke="#000" /></Icon></Caption>
            <Caption aria-label="Maximize"><Icon w={10} h={10}><path d="M.5.5h9v9h-9z" stroke="#000" /></Icon></Caption>
            <Caption aria-label="Close"><Icon w={10} h={10}><path d="M0 0l10 10M10 0L0 10" stroke="#000" /></Icon></Caption>
          </TitleBar>

          <MenuBar>
            <svg width="23" height="16" viewBox="0 0 23 16" fill="#fff" stroke="#5b9be0">
              <path d="M1.500 1.500h11v10h-11zM1.500 3h11" />
              <path d="M4.500 5.500h10v9h-10zM4.500 7h10" />
              <path d="M6 10l2 2 2-2 2 2 1-2" fill="none" />
            </svg>
            {menus.map(([m, w]) => <MenuItem key={m} $w={w}>{m}</MenuItem>)}
            <MdiButtons>
              <MdiButton aria-label="Minimize chart"><Icon w={8} h={8}><path d="M1 7h6" stroke="#778899" strokeWidth="2" /></Icon></MdiButton>
              <MdiButton aria-label="Restore chart"><Icon w={8} h={8}><path d="M2.500 2V.5h5v4H6M.5 3.500h5v4h-5zM.5 4h5M2.500 1h5" stroke="#778899" /></Icon></MdiButton>
              <MdiButton aria-label="Close chart"><Icon w={8} h={8}><path d="M1 1l6 6M7 1L1 7" stroke="#778899" strokeWidth="2" /></Icon></MdiButton>
            </MdiButtons>
          </MenuBar>

          <ToolBar role="toolbar">
            <Grip />
            <Group>
              <Tool $w={24} aria-label="Market watch">
                <Icon>
                  <rect x="1.500" y="1.500" width="15" height="15" rx="1" fill="#fff" stroke="#5b93cf" strokeWidth="2" />
                  <path d="M3 8l3.500-4L10 8H8v2H5V8z" fill="#2fa52f" stroke="none" />
                  <path d="M8 11l3.500 4 3.500-4h-2V9h-3v2z" fill="#ee8a35" stroke="none" />
                </Icon>
              </Tool>
              <Tool $w={30} aria-label="Favorites">
                <Icon>
                  <path d="M1 2.500h5l1 1.500h5v7H1z" fill="#fbe28a" stroke="#c79a2b" />
                  <path d="M12 6l1.700 3.600 4 .4-3 2.600.9 4-3.600-2.100-3.600 2.100.9-4-3-2.600 4-.4z" fill="#ffd94a" stroke="#b98a18" />
                </Icon>
              </Tool>
              <Tool $w={102}>
                <Icon>
                  <path d="M2.500 1.500h7l3 3v10h-10z" fill="#fff" stroke="#777" />
                  <path d="M4 5h5M4 7.500h7M4 10h4" />
                  <path d="M11 7.500v10M6 12.500h10" stroke="#0c8a1c" strokeWidth="5" />
                  <path d="M11 8.500v8M7 12.500h8" stroke="#35e04a" strokeWidth="3" />
                </Icon>
                Новый ордер
              </Tool>
              <Tool aria-label="Navigator">
                <Icon>
                  <rect x="1.500" y="2.500" width="15" height="13" rx="1" fill="#fff" stroke="#3e78b8" />
                  <path d="M2 3v12h3V3z" fill="#3e78b8" stroke="none" />
                  <path d="M7 6h8M7 8.500h8M7 11h8" stroke="#9db9dc" />
                </Icon>
              </Tool>
            </Group>
            <Divider />
            <Grip />
            <Group>
              <Tool $on aria-label="Cursor"><Icon><path d="M6 2v12l3-3 2 5 2-1-2-5h4z" fill="#555" stroke="none" /></Icon></Tool>
              <Tool aria-label="Crosshair"><Icon w={17} h={17}><path d="M8.500 1v6M8.500 10v6M1 8.500h6M10 8.500h6" /></Icon></Tool>
              <Tool aria-label="Vertical line"><Icon w={17} h={17}><path d="M8.500 2v13" /></Icon></Tool>
              <Tool aria-label="Horizontal line"><Icon w={17} h={17}><path d="M2 8.500h13" /></Icon></Tool>
              <Tool aria-label="Trend line"><Icon><path d="M3 15L15 3" /></Icon></Tool>
              <Tool aria-label="Equidistant channel">
                <Icon><path d="M1 9l11-8M2 14L14 5M5 5l1 10M8 3l1 9M11 2v8M1 12l12-9" /><FLetter c="E" /></Icon>
              </Tool>
              <Tool aria-label="Fibonacci">
                <Icon><path d="M1 1.500h16M1 5.500h16M1 9.500h16" strokeDasharray="1 1" /><path d="M1 16l4-4 4 3" /><FLetter /></Icon>
              </Tool>
              <Tool aria-label="Text"><Icon><text x="5" y="14" fontSize="13" fontWeight="700" fontFamily={NARROW} fill="#666" stroke="none">A</text></Icon></Tool>
              <Tool $w={36} aria-label="Arrows">
                <Icon>
                  <path d="M1 4.500l4-3.500 4 3.500-4 3zM9 13l4-3 4 3-4 3.500z" fill="#555" stroke="none" />
                  <path d="M2 9l3 2.500 3-1M9 6l3 2" strokeWidth="1.500" />
                </Icon>
                <Down />
              </Tool>
              <Tool aria-label="Objects list">
                <Icon><path d="M1 2.500h15M1 6.500h15M1 10.500h15M1 14.500h9" strokeDasharray="1 1" /><FLetter /></Icon>
              </Tool>
            </Group>
            <Divider />
            <Grip />
            <Group>
              {["M1", "M5", "M15", "M30", "H1", "H4", "D1", "W1", "MN"].map((f) => (
                <Frame key={f} $on={f === "H1"}>{f}</Frame>
              ))}
            </Group>
            <Group $gap={1}>
              <span />
              <Divider />
            </Group>
            <Grip />
            <Group>
              <Tool $on aria-label="Candles"><Icon><Axes /><rect x="9.500" y="3.500" width="4" height="8" fill="#26d03c" stroke="#0c8a1c" /><path d="M11.500 1v2M11.500 12v2" stroke="#0c8a1c" /></Icon></Tool>
              <Tool aria-label="Line chart"><Icon><Axes /><path d="M4 11c3-6 5-6 10 0" stroke="#2fa52f" strokeWidth="1.500" /></Icon></Tool>
              <Tool aria-label="Zoom in"><Magnifier plus /></Tool>
              <Tool aria-label="Zoom out"><Magnifier /></Tool>
              <Tool aria-label="Auto scroll"><Icon><Axes /><path d="M9 4v8l4-4z" fill="#26c03c" stroke="#0c8a1c" /></Icon></Tool>
              <Tool $on aria-label="Chart shift"><Icon><Axes /><path d="M9.500 1v12" stroke="#2b5da8" strokeWidth="1.500" /><path d="M16 7.500h-4M13.500 4.500l-3 3 3 3" stroke="#c33a12" strokeWidth="1.500" /></Icon></Tool>
              <Tool $w={36} aria-label="Templates">
                <Icon>
                  <rect x="1.500" y="1.500" width="15" height="15" rx="1" fill="#fff" stroke="#3e78b8" />
                  <path d="M1 1h16v4H1z" fill="#3e78b8" stroke="none" />
                  <path d="M2 10.500h14" stroke="#3e78b8" />
                  <path d="M3 8.500l4-1 3 1 4-2" stroke="#b23a22" />
                  <path d="M3 14l3-1 3 1 4-2 2 2" stroke="#2fa52f" />
                </Icon>
                <Down />
              </Tool>
            </Group>
            <Divider />
            <ToolEnd>
              <Icon w={14} h={14}><circle cx="9" cy="5" r="4" fill="#eef5ff" stroke="#2f66d0" strokeWidth="1.500" /><path d="M6 8l-5 5" stroke="#2f66d0" strokeWidth="2.500" /></Icon>
              <svg width="20" height="24" viewBox="0 0 20 24">
                <ellipse cx="7" cy="15" rx="6.500" ry="5" fill="#e8e8ee" stroke="#aaa" />
                <path d="M5 19l1 4 4-4z" fill="#bbb" />
                <circle cx="13" cy="10" r="8" fill="#df3a22" />
                <text x="10" y="14" fontSize="12" fill="#fff" fontFamily={UI}>1</text>
              </svg>
            </ToolEnd>
          </ToolBar>

          <ChartArea>
            <PricePane />
            <FastPane />
            <SlowPane />
            <TimeAxis>{timeLabels.map((t) => <TimeCell key={t}>{t}</TimeCell>)}</TimeAxis>
            <Trade onSubmit={(e) => e.preventDefault()}>
              <Side type="button">SELL</Side>
              <Lots>
                <LotStep type="button" aria-label="Decrease volume"><Down /></LotStep>
                <LotInput aria-label="Volume" defaultValue="0.05" />
                <LotStep type="button" aria-label="Increase volume"><Down up /></LotStep>
              </Lots>
              <Side type="button">BUY</Side>
              <Quotes>
                <Quote type="button"><b>1.30</b><span>96</span><sup>2</sup></Quote>
                <Quote type="button"><b>1.30</b><span>99</span><sup>2</sup></Quote>
              </Quotes>
            </Trade>
            <Watermark>
              <h2>Активация Windows</h2>
              <p>Чтобы активировать Windows, перейдите в раздел</p>
              <p>"Параметры".</p>
            </Watermark>
          </ChartArea>

          <Tabs role="tablist">
            {tabs.map(([t, w], i) => (
              <Tab key={i} role="tab" $w={w} $on={i === 1} $bar={i > 1} aria-selected={i === 1}>{t}</Tab>
            ))}
            <TabArrows>
              <svg width="4" height="8" fill="#888"><path d="M4 0v8L0 4z" /></svg>
              <svg width="4" height="8" fill="#888"><path d="M0 0v8l4-4z" /></svg>
            </TabArrows>
          </Tabs>
          <StatusBar>
            <StatusText>Для вызова справки нажмите F1</StatusText>
            {[116, 102, 71, 71, 69, 69, 66].map((w, i) => <StatusCell key={i} $w={w} />)}
            <StatusCell $w={141}>
              <svg width="23" height="13" shapeRendering="crispEdges">
                {[0, 1, 2, 3, 4, 5, 6, 7].map((i) => (
                  <g key={i}>
                    <rect x={i * 3} width="2" y="0" height={9 - i} fill="#5f8a10" />
                    <rect x={i * 3} width="2" y={10 - i} height={3 + i} fill="#a01408" />
                  </g>
                ))}
              </svg>
              5902/7 kb
            </StatusCell>
          </StatusBar>
        </Window>
      </Desktop>

      <TaskBar>
        <Start aria-label="Start">
          <svg width="16" height="16" fill="#fff"><path d="M0 2.300L6.500 1.400v6.200H0zM7.500 1.200L16 0v7.600H7.500zM0 8.500h6.500v6.200L0 13.800zM7.500 8.500H16V16l-8.500-1.200z" /></svg>
        </Start>
        <Search>
          <svg width="17" height="17" fill="none" stroke="#222" strokeWidth="1.500"><circle cx="10.500" cy="6.500" r="5.500" /><path d="M6.500 10.500L1 16" /></svg>
          <SearchInput placeholder="Поиск" />
          <svg width="50" height="38" viewBox="0 0 50 38">
            <defs>
              <linearGradient id="shell" x1="0" y1="0" x2="1" y2="1">
                <stop offset="0" stopColor="#d9b48c" />
                <stop offset=".5" stopColor="#cdd0d6" />
                <stop offset="1" stopColor="#b08a78" />
              </linearGradient>
            </defs>
            <path d="M49 35C36 38 30 31 30 26c-1 8-8 11-14 11C7 37 1 30 1 20 1 8 10 1 22 1c15 0 26 14 27 34z" fill="url(#shell)" stroke="#c09468" />
            <path d="M17 22Q16 10 11 3M17 22Q12 12 3 10M17 22Q8 17 1 22M17 22Q9 24 5 33M17 22q-4 8-2 15M17 22q2 8 9 13" stroke="#fff" strokeWidth="1.500" fill="none" opacity=".8" />
            <path d="M30 26c0-7-5-12-12-12-6 0-10 4-10 9s4 8 9 8 7-3 7-7-3-6-6-6-5 2-5 5 2 4 4 4" stroke="#fff" strokeWidth="2" fill="none" />
          </svg>
        </Search>
        <Apps>
          <TaskButton aria-label="Word">
            <svg width="24" height="24" viewBox="0 0 24 24">
              <rect x="8" y="1" width="15" height="21" fill="#f4f8fd" stroke="#9db9dc" />
              <path d="M14 6h8M14 9h8M14 12h8" stroke="#7fa5d8" />
              <path d="M1 3l15-2v21L1 20z" fill="#dce9f8" />
              <path d="M3 6l2.500 11L9 8l3 9 3-12" stroke="#1b56b4" strokeWidth="3" fill="none" />
            </svg>
          </TaskButton>
          <TaskButton aria-label="Chrome">
            <svg width="24" height="24" viewBox="0 0 24 24">
              <circle cx="12" cy="12" r="12" fill="#fbc116" />
              <path d="M1.600 6A12 12 0 0 1 22.400 6H12a6 6 0 0 0-5.200 9z" fill="#e33b2e" />
              <path d="M1.600 6A12 12 0 0 0 12 24l5.200-9A6 6 0 0 1 6.800 15z" fill="#229f4e" />
              <circle cx="12" cy="12" r="6" fill="#fff" />
              <circle cx="12" cy="12" r="4.600" fill="#2a79e8" />
            </svg>
          </TaskButton>
          <TaskButton $on aria-label="InstaForex"><InstaLogo size={24} /></TaskButton>
        </Apps>
        <Tray>
          <Weather>
            <svg width="24" height="16" viewBox="0 0 24 16"><path d="M5 16a5 5 0 0 1 0-10 7 7 0 0 1 13-1 5.500 5.500 0 0 1 1 11z" fill="#9cc0f8" /><path d="M5 16a5 5 0 0 1-4-3h22a5 5 0 0 1-4 3z" fill="#6d9df0" /></svg>
            <span>{"13°C  Cloudy"}</span>
          </Weather>
          <TrayButton $w={24} aria-label="Hidden icons"><svg width="12" height="8" fill="none" stroke="#fff" strokeWidth="1.500"><path d="M1 7l5-5 5 5" /></svg></TrayButton>
          <TrayButton $w={24} aria-label="Meet now"><svg width="13" height="16" fill="none" stroke="#fff"><rect x="1.500" y="4.500" width="7" height="7" rx="1" /><path d="M8.500 7l3-1.500v5L8.500 9M2 2q4-2.500 8 0M2 14q4 2.500 8 0" /></svg></TrayButton>
          <TrayButton $w={24} aria-label="Network"><svg width="17" height="16" fill="none" stroke="#fff"><path d="M4.500 3.500h12v8h-12zM10.500 11.500v3M7 14.500h7M.5 2.500h5v4h-5zM3 6.500v6" /></svg></TrayButton>
          <TrayButton $w={22} aria-label="Volume"><svg width="17" height="14" fill="none" stroke="#fff"><path d="M1 5h2l4-4v12L3 9H1zM9 5q1.500 2 0 4M11.500 3q3 4 0 8" /><path d="M14 1q4 6 0 12" stroke="#777" /></svg></TrayButton>
          <TrayButton $w={38}>РУС</TrayButton>
          <Clock>16:40<br />23.11.2025</Clock>
          <Notify $w={44} aria-label="Notifications, 8 new">
            <svg width="26" height="26" viewBox="0 0 26 26">
              <path d="M3 3h16v12h-9l-3 4v-4H3z" fill="#fff" />
              <path d="M6 6.500h10M6 9.500h10M6 12.500h6" stroke="#000" />
              <circle cx="17" cy="18" r="7.500" fill="#333" stroke="#888" />
              <text x="14" y="22" fontSize="11" fontWeight="700" fill="#fff" fontFamily={UI}>8</text>
            </svg>
          </Notify>
        </Tray>
      </TaskBar>
    </>
  );
}
